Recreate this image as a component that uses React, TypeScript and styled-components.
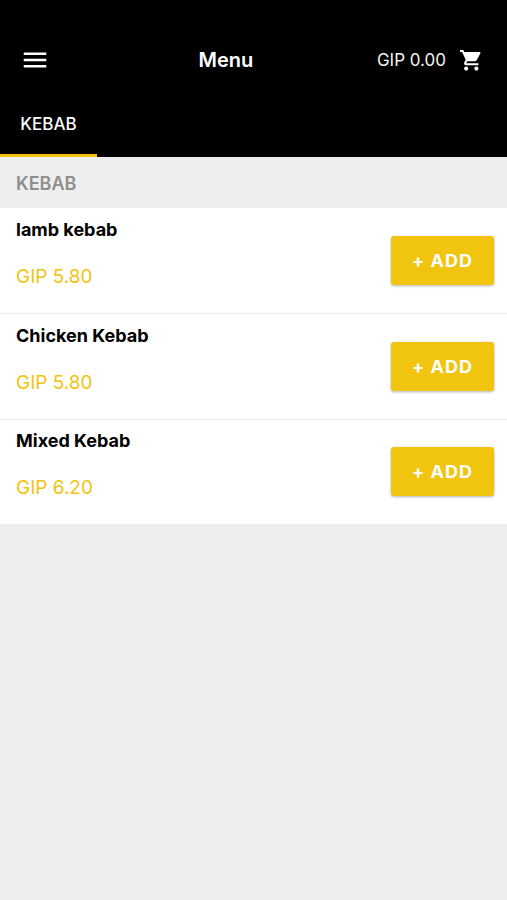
import React from "react";
import styled, { createGlobalStyle } from "styled-components";

const GlobalStyle = createGlobalStyle`
  *, *::before, *::after { box-sizing: border-box; }
  body {
    margin: 0;
    background: #eeeeee;
    color: #000;
    font-family: Inter, "Liberation Sans", sans-serif;
  }
  button { font-family: inherit; border: 0; cursor: pointer; }
`;

const Header = styled.header`
  background: #000;
  color: #fff;
  padding-top: 30px;
`;

const Toolbar = styled.div`
  display: flex;
  align-items: center;
  height: 60px;
`;

const MenuButton = styled.button`
  display: flex;
  width: 75px;
  padding: 0 0 0 20px;
  background: transparent;
  color: #fff;
`;

const Title = styled.h1`
  flex: 1;
  margin: 0;
  text-align: center;
  font-size: 20px;
  line-height: 24px;
  font-weight: 600;
`;

const CartButton = styled.button`
  display: flex;
  align-items: center;
  gap: 14px;
  padding: 0 25px 0 0;
  background: transparent;
  color: #f2f2f2;
  font-size: 17px;
  line-height: 24px;
`;

const Tabs = styled.nav`
  display: flex;
`;

const Tab = styled.button<{ $active: boolean }>`
  height: 67px;
  width: 97px;
  padding: 4px 0 0;
  background: transparent;
  color: #fff;
  font-size: 17px;
  line-height: 24px;
  font-weight: 500;
  border-bottom: 3px solid ${(p) => (p.$active ? "#f1c40f" : "transparent")};
`;

const SectionTitle = styled.h2`
  margin: 0;
  padding: 15px 16px 12px;
  font-size: 18px;
  line-height: 24px;
  font-weight: 600;
  color: #8e8e8e;
`;

const List = styled.ul`
  margin: 0;
  padding: 0;
  list-style: none;
  background: #fff;
`;

const Item = styled.li`
  display: flex;
  align-items: center;
  justify-content: space-between;
  padding: 10px 13px 24px 16px;

  & + & {
    border-top: 1px solid #eeeeee;
  }

  &:last-child {
    padding-top: 9px;
  }
`;

const ItemName = styled.h3`
  margin: 0 0 22px;
  font-size: 18px;
  line-height: 24px;
  font-weight: 700;
`;

const Price = styled.p`
  margin: 0;
  font-size: 19px;
  line-height: 25px;
  color: #f1c40f;
`;

const AddButton = styled.button`
  align-self: flex-start;
  min-width: 103px;
  height: 49px;
  margin-top: 18px;
  padding: 0 20px;
  border-radius: 3px;
  background: #f1c40f;
  box-shadow: 0 1px 3px rgba(0, 0, 0, 0.3);
  color: #fff;
  font-size: 18px;
  line-height: 24px;
  font-weight: 700;
  letter-spacing: 1px;
`;

const categories = ["KEBAB"];

const items = [
  { name: "lamb kebab", price: "GIP 5.80" },
  { name: "Chicken Kebab", price: "GIP 5.80" },
  { name: "Mixed Kebab", price: "GIP 6.20" },
];

const MenuIcon = () => (
  <svg width="30" height="30" viewBox="0 0 24 24" fill="currentColor" aria-hidden="true">
    <path d="M3 18h18v-2H3v2zm0-5h18v-2H3v2zm0-7v2h18V6H3z" />
  </svg>
);

const CartIcon = () => (
  <svg width="22" height="22" viewBox="1 1 21.5 21.5" fill="#fff" aria-hidden="true">
    <path d="M7 18c-1.1 0-1.99.9-1.99 2S5.9 22 7 22s2-.9 2-2-.9-2-2-2zM1 2v2h2l3.6 7.59-1.35 2.45c-.16.28-.25.61-.25.96 0 1.1.9 2 2 2h12v-2H7.42c-.14 0-.25-.11-.25-.25l.03-.12.9-1.63h7.45c.75 0 1.41-.41 1.75-1.03l3.58-6.49c.08-.14.12-.31.12-.48 0-.55-.45-1-1-1H5.21l-.94-2H1zm16 16c-1.1 0-1.99.9-1.99 2s.89 2 1.99 2 2-.9 2-2-.9-2-2-2z" />
  </svg>
);

export default function App() {
  return (
    <>
      <GlobalStyle />
      <Header>
        <Toolbar>
          <MenuButton aria-label="Open navigation">
            <MenuIcon />
          </MenuButton>
          <Title>Menu</Title>
          <CartButton>
            <span>GIP 0.00</span>
            <CartIcon />
          </CartButton>
        </Toolbar>
        <Tabs>
          {categories.map((name, index) => (
            <Tab key={name} $active={index === 0}>
              {name}
            </Tab>
          ))}
        </Tabs>
      </Header>
      <main>
        <SectionTitle>KEBAB</SectionTitle>
        <List>
          {items.map((item) => (
            <Item key={item.name}>
              <div>
                <ItemName>{item.name}</ItemName>
                <Price>{item.price}</Price>
              </div>
              <AddButton aria-label={`Add ${item.name}`}>+ ADD</AddButton>
            </Item>
          ))}
        </List>
      </main>
    </>
  );
}
